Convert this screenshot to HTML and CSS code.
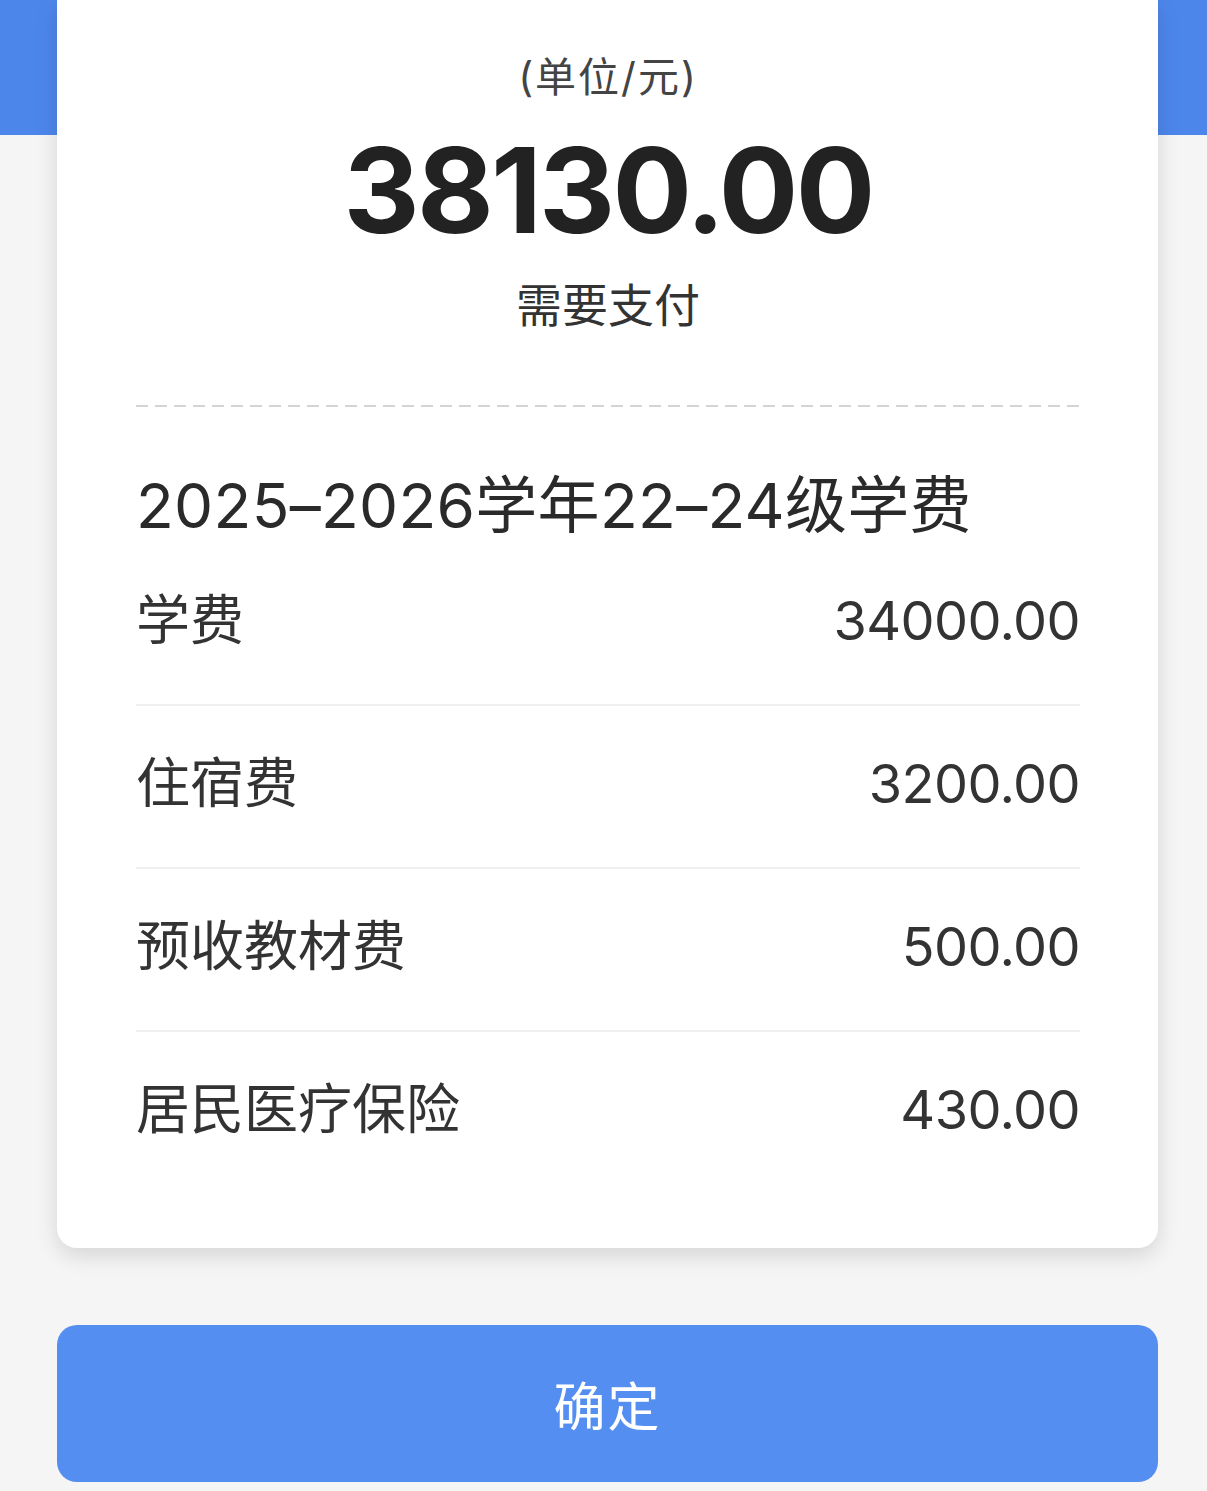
FILE: index.html
```html
<!DOCTYPE html>
<html lang="zh-CN">
<head>
    <meta charset="UTF-8">
    <meta name="viewport" content="width=device-width, initial-scale=1.0">
    <title>缴费确认</title>
    <link rel="stylesheet" href="styles.css">
</head>
<body>
    <main class="page">
        <section class="pay-card">
            <div class="pay-head">
                <p class="unit">(单位/元)</p>
                <h1 class="total">38130.00</h1>
                <p class="total-label">需要支付</p>
            </div>

            <div class="bill">
                <h2 class="bill-title">2025–2026学年22–24级学费</h2>
                <ul class="bill-list">
                    <li><span>学费</span><span class="money">34000.00</span></li>
                    <li><span>住宿费</span><span class="money">3200.00</span></li>
                    <li><span>预收教材费</span><span class="money">500.00</span></li>
                    <li><span>居民医疗保险</span><span class="money">430.00</span></li>
                </ul>
            </div>
        </section>

        <button class="confirm-btn">确定</button>
    </main>
</body>
</html>
```

FILE: styles.css
```css
body {
    margin: 0;
    font-family: "Inter", "Noto Sans CJK SC", sans-serif;
    color: #333;
    background: linear-gradient(#4d86eb 0, #4d86eb 135px, #f5f5f5 135px);
    min-height: 1491px;
}

.page {
    padding: 0 49px 0 57px;
}

.pay-card {
    background: #fff;
    border-radius: 0 0 20px 20px;
    box-shadow: 0 8px 22px rgba(0, 0, 0, 0.13);
    padding: 47px 78px 55px 79px;
}

.pay-head {
    text-align: center;
    padding-bottom: 70px;
    background-image: repeating-linear-gradient(90deg, #d4d4d4 0, #d4d4d4 12px, transparent 12px, transparent 19px);
    background-size: 100% 2px;
    background-position: bottom left;
    background-repeat: no-repeat;
}

.pay-head p,
.pay-head h1 {
    margin: 0;
}

.unit {
    font-size: 41px;
    line-height: 60px;
    color: #444;
    letter-spacing: 2px;
}

.total {
    font-size: 118px;
    font-weight: 700;
    line-height: 166px;
    color: #222;
    letter-spacing: -2.8px;
}

.total-label {
    font-size: 46px;
    line-height: 64px;
    color: #333;
}

.bill-title {
    margin: 62px 0 0;
    font-size: 62px;
    font-weight: 400;
    line-height: 74px;
    color: #2a2a2a;
    letter-spacing: 0.3px;
}

.bill-list {
    list-style: none;
    margin: 0;
    padding: 0;
}

.bill-list li {
    display: flex;
    justify-content: space-between;
    align-items: center;
    padding: 38px 0 43px;
    font-size: 54px;
    line-height: 80px;
    color: #333;
    border-bottom: 2px solid #f0f0f0;
}

.bill-list li:last-child {
    border-bottom: none;
}

.money {
    letter-spacing: -0.6px;
}

.confirm-btn {
    display: block;
    width: 100%;
    height: 157px;
    margin-top: 77px;
    border: none;
    border-radius: 20px;
    background-color: #548ef0;
    color: #fff;
    font-family: inherit;
    font-size: 52px;
    letter-spacing: 2px;
}
```
